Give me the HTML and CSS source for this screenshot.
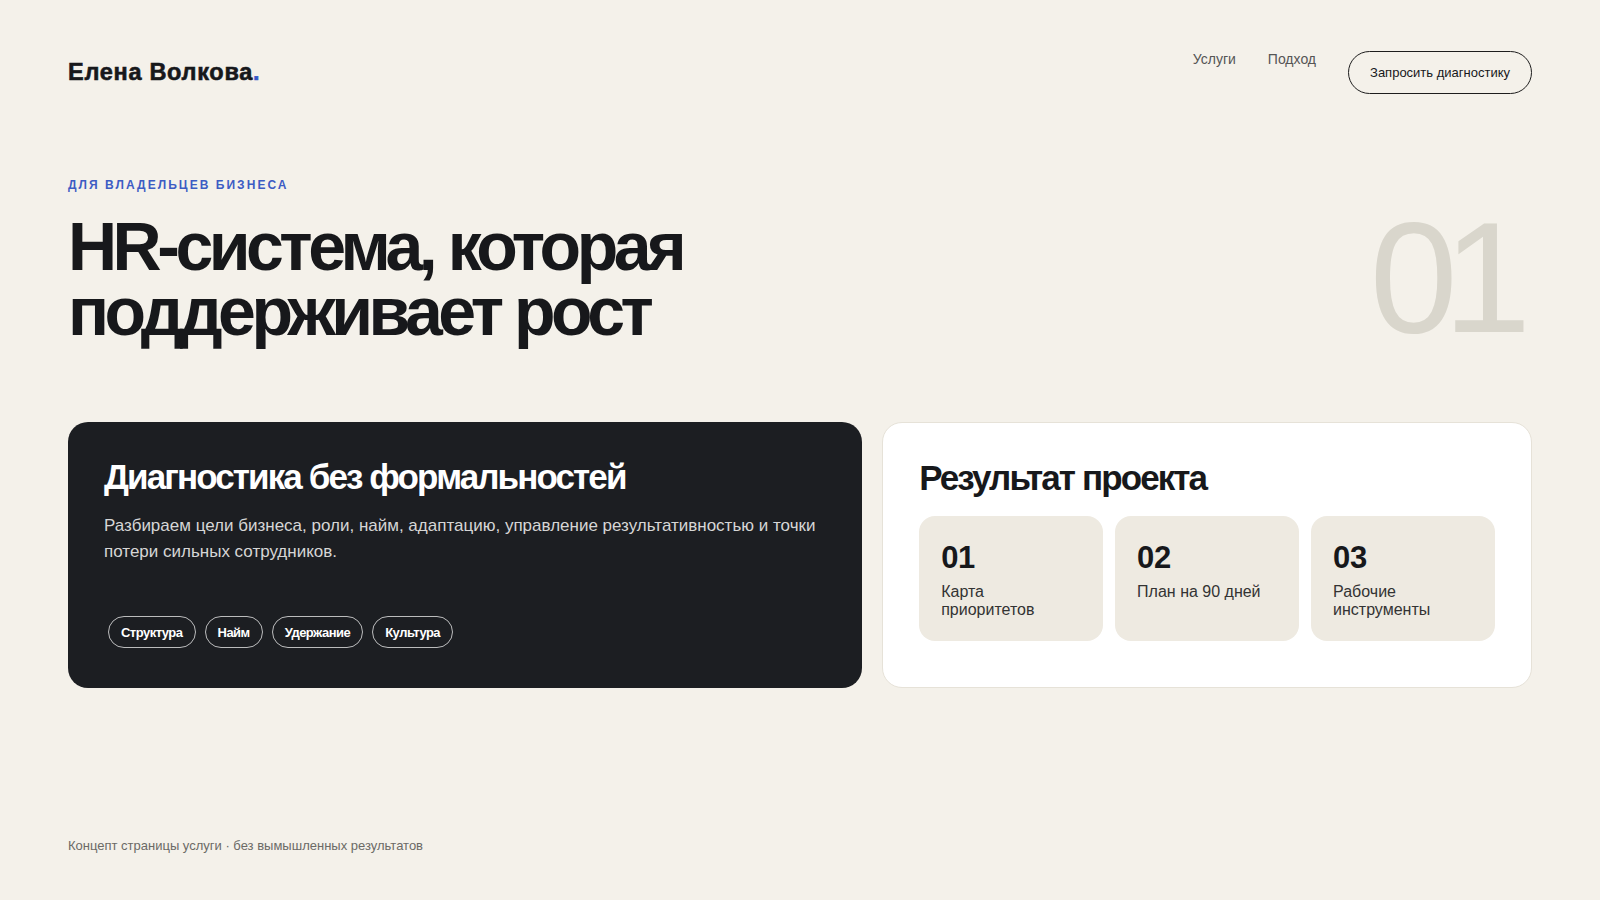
FILE: index.html
```
<!DOCTYPE html>
<html lang="ru">
<head>
<meta charset="utf-8">
<title>Елена Волкова — HR-система</title>
<link rel="stylesheet" href="styles.css">
</head>
<body>
<div class="page">
  <header class="header">
    <div class="logo">Елена Волкова<span class="dot">.</span></div>
    <nav class="nav">
      <a class="nav-link" href="#">Услуги</a>
      <a class="nav-link" href="#">Подход</a>
      <a class="btn" href="#">Запросить диагностику</a>
    </nav>
  </header>

  <section class="hero">
    <div class="hero-text">
      <div class="eyebrow">Для владельцев бизнеса</div>
      <h1 class="headline">HR-система, которая<br>поддерживает рост</h1>
    </div>
    <div class="hero-num">01</div>
  </section>

  <section class="cards">
    <div class="card card-dark">
      <h2 class="card-title">Диагностика без формальностей</h2>
      <p class="card-text">Разбираем цели бизнеса, роли, найм, адаптацию, управление результативностью и точки потери сильных сотрудников.</p>
      <div class="tags">
        <span class="tag">Структура</span>
        <span class="tag">Найм</span>
        <span class="tag">Удержание</span>
        <span class="tag">Культура</span>
      </div>
    </div>
    <div class="card card-light">
      <h2 class="card-title">Результат проекта</h2>
      <div class="results">
        <div class="result">
          <div class="result-num">01</div>
          <div class="result-label">Карта приоритетов</div>
        </div>
        <div class="result">
          <div class="result-num">02</div>
          <div class="result-label">План на 90 дней</div>
        </div>
        <div class="result">
          <div class="result-num">03</div>
          <div class="result-label">Рабочие инструменты</div>
        </div>
      </div>
    </div>
  </section>

  <footer class="footer">Концепт страницы услуги · без вымышленных результатов</footer>
</div>
</body>
</html>
```

FILE: styles.css
```
* { box-sizing: border-box; }

html, body {
  margin: 0;
  padding: 0;
}

body {
  background: #f4f1ea;
  color: #17181b;
  font-family: "Liberation Sans", Arial, sans-serif;
}

.page {
  min-height: 900px;
  padding: 0 68px;
  display: flex;
  flex-direction: column;
}

.header {
  display: flex;
  justify-content: space-between;
  align-items: center;
  padding-top: 51px;
}

.logo {
  font-size: 23.5px;
  font-weight: 700;
  letter-spacing: 0.03em;
  -webkit-text-stroke: 0.6px #17181b;
  color: #17181b;
}

.logo .dot {
  color: #3457c8;
  -webkit-text-stroke: 0.6px #3457c8;
}

.nav {
  display: flex;
  gap: 32px;
}

.nav-link {
  font-size: 14px;
  color: #555;
  text-decoration: none;
}

.btn {
  display: flex;
  align-items: center;
  height: 43px;
  padding: 0 21px;
  border: 1px solid #1d1d1d;
  border-radius: 999px;
  font-size: 13px;
  color: #17181b;
  text-decoration: none;
}

.hero {
  display: flex;
  justify-content: space-between;
  align-items: flex-end;
  margin-top: 84px;
}

.eyebrow {
  font-size: 12px;
  font-weight: 700;
  letter-spacing: 0.17em;
  text-transform: uppercase;
  color: #3d5cc4;
}

.headline {
  margin: 22px 0 0;
  font-size: 68px;
  line-height: 0.95;
  font-weight: 700;
  letter-spacing: -0.066em;
  color: #17181b;
}

.hero-num {
  font-size: 158px;
  line-height: 0.8;
  font-weight: 400;
  color: #d9d6cc;
  letter-spacing: -0.09em;
  margin-bottom: 3px;
  margin-right: 15px;
}

.cards {
  display: grid;
  grid-template-columns: 11fr 9fr;
  gap: 20px;
  margin-top: 79px;
}

.card {
  border-radius: 20px;
  height: 266px;
  padding: 36px 36px 0;
  display: flex;
  flex-direction: column;
}

.card-dark {
  background: #1c1e22;
  color: #fff;
}

.card-light {
  background: #fff;
  border: 1px solid #e6e2d8;
}

.card-title {
  margin: 0;
  font-size: 35px;
  line-height: 1.1;
  font-weight: 700;
  letter-spacing: -0.054em;
}

.card-text {
  margin: 16px 0 0;
  font-size: 17px;
  line-height: 1.55;
  color: #d6d6d6;
  max-width: 720px;
}

.tags {
  display: flex;
  gap: 9px;
  margin-top: auto;
  margin-bottom: 40px;
  margin-left: 4px;
}

.tag {
  display: flex;
  align-items: center;
  height: 32px;
  padding: 0 12px;
  border: 1px solid rgba(255, 255, 255, 0.7);
  border-radius: 999px;
  font-size: 13px;
  font-weight: 700;
  letter-spacing: -0.04em;
  color: #fff;
}

.card-light .card-title {
  color: #17181b;
}

.results {
  display: grid;
  grid-template-columns: repeat(3, 1fr);
  gap: 12px;
  margin-top: 18px;
}

.result {
  background: #eeeae1;
  border-radius: 16px;
  height: 125px;
  padding: 25px 22px 0;
}

.result-num {
  font-size: 31px;
  font-weight: 700;
  line-height: 1.1;
  letter-spacing: -0.01em;
  color: #17181b;
}

.result-label {
  margin-top: 8px;
  font-size: 16px;
  line-height: 1.15;
  color: #333;
  max-width: 124px;
}

.footer {
  margin-top: auto;
  padding-bottom: 47px;
  font-size: 13px;
  color: #6b6a66;
}
```
